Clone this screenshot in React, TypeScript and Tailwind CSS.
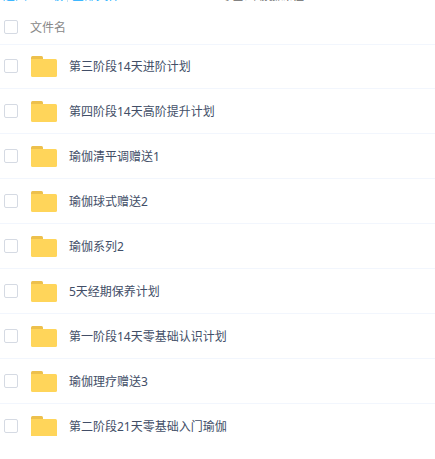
import React, { useState } from 'react';

const FOLDERS = [
  '第三阶段14天进阶计划',
  '第四阶段14天高阶提升计划',
  '瑜伽清平调赠送1',
  '瑜伽球式赠送2',
  '瑜伽系列2',
  '5天经期保养计划',
  '第一阶段14天零基础认识计划',
  '瑜伽理疗赠送3',
  '第二阶段21天零基础入门瑜伽',
];

const CHECKBOX =
  'block size-3.5 shrink-0 appearance-none rounded-xs border border-[#d5dae3] bg-white checked:border-[#09aaff] checked:bg-[#09aaff]';

const FolderIcon: React.FC = () => (
  <svg className="block shrink-0" width="26" height="21" viewBox="0 0 26 21" aria-hidden="true">
    <path d="M0 4V1.5Q0 0 1.5 0H10.5Q12 0 12 1.5V4Z" fill="#edc04c" />
    <path d="M0 3H24.5Q26 3 26 4.5V19.5Q26 21 24.5 21H1.5Q0 21 0 19.5Z" fill="#ffd55a" />
  </svg>
);

const Breadcrumb: React.FC = () => (
  <nav className="-mt-3 flex h-[21px] items-start pl-[3px] leading-4 whitespace-nowrap text-[#666]">
    <a href="#" className="text-[#09aaff]">返回上一级</a>
    <span className="mx-1 mt-0.5 h-3 w-px bg-[#c4e1f5]" />
    <a href="#" className="text-[#09aaff]">全部文件</a>
    <span className="ml-auto mr-[131px]">零基础瑜伽课程</span>
  </nav>
);

const App: React.FC = () => {
  const [selected, setSelected] = useState<string[]>([]);

  const toggle = (name: string) =>
    setSelected(prev => (prev.includes(name) ? prev.filter(n => n !== name) : [...prev, name]));

  const allSelected = selected.length === FOLDERS.length;

  return (
    <div className="flow-root overflow-hidden bg-white font-['Noto_Sans','Noto_Sans_CJK_SC',sans-serif] text-xs text-[#424e67]">
      <Breadcrumb />

      <div className="flex h-9 items-center border-b border-[#f2f6fd] pl-1">
        <input
          id="select-all"
          type="checkbox"
          className={CHECKBOX}
          checked={allSelected}
          onChange={() => setSelected(allSelected ? [] : FOLDERS)}
        />
        <label htmlFor="select-all" className="ml-3 pt-0.5 leading-4 text-[#888]">文件名</label>
      </div>

      <ul className="-mt-px">
        {FOLDERS.map((name, i) => (
          <li key={name} className="overflow-hidden border-b border-[#f2f6fd] last:h-8 last:border-0">
            <div className="flex h-11 items-center pl-1">
              <input
                id={`folder-${i}`}
                type="checkbox"
                className={CHECKBOX}
                checked={selected.includes(name)}
                onChange={() => toggle(name)}
              />
              <label htmlFor={`folder-${i}`} className="ml-[13px] flex items-center gap-3 leading-4 whitespace-nowrap">
                <FolderIcon />
                <span className="pt-0.5">{name}</span>
              </label>
            </div>
          </li>
        ))}
      </ul>
    </div>
  );
};

export default App;
